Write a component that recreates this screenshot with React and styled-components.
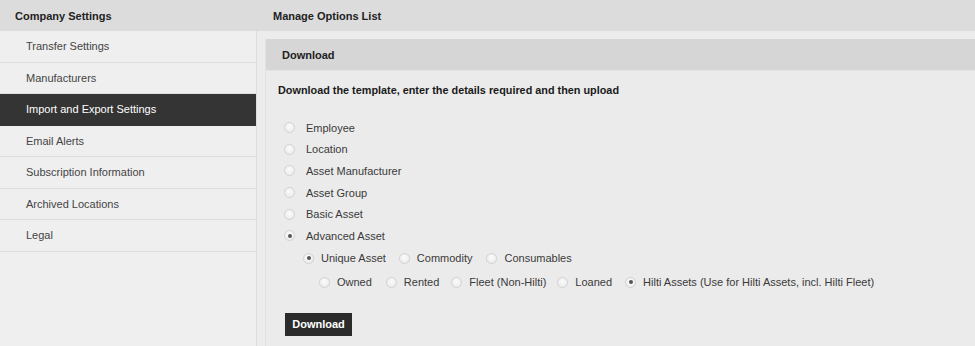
import React from "react";
import styled, { createGlobalStyle } from "styled-components";

const Global = createGlobalStyle`
  html, body { margin: 0; padding: 0; background: #ececec; }
  body { font-family: "Liberation Sans", Arial, sans-serif; font-size: 11px; color: #333; }
  * { box-sizing: border-box; }
`;

const Page = styled.div`
  display: grid;
  grid-template-columns: 257px 1fr;
  width: 975px;
  height: 346px;
  overflow: hidden;
`;

const Sidebar = styled.div`
  background: #efefef;
  border-right: 1px solid #dcdcdc;
  display: flex;
  flex-direction: column;
`;

const HeaderBar = styled.div`
  height: 31px;
  background: #dcdcdc;
  display: flex;
  align-items: center;
  padding-left: ${(p) => p.$pad}px;
  font-weight: bold;
  color: #222;
  font-size: 11px;
`;

const NavItem = styled.div`
  height: 31.5px;
  display: flex;
  align-items: center;
  padding-left: 26px;
  border-bottom: 1px solid ${(p) => (p.$active ? "#333" : "#dedede")};
  background: ${(p) => (p.$active ? "#343434" : "transparent")};
  color: ${(p) => (p.$active ? "#fff" : "#444")};
`;

const Main = styled.div`
  display: flex;
  flex-direction: column;
  min-width: 0;
`;

const Content = styled.div`
  padding: 8px 0 0 8px;
  flex: 1;
`;

const Panel = styled.div`
  background: #ebebeb;
  border-left: 1px solid #e2e2e2;
  height: 100%;
`;

const PanelHeader = styled.div`
  height: 32px;
  background: #d6d6d6;
  display: flex;
  align-items: center;
  padding-left: 16px;
  font-weight: bold;
  color: #222;
  border-bottom: 1px solid #e4e4e4;
`;

const PanelBody = styled.div`
  padding: 13px 0 0 12px;
`;

const Intro = styled.div`
  font-weight: bold;
  color: #1a1a1a;
  font-size: 10.85px;
  margin-bottom: 21px;
`;

const RadioRow = styled.div`
  display: flex;
  align-items: center;
  height: ${(p) => p.$h || 21.6}px;
  padding-left: ${(p) => p.$indent || 0}px;
`;

const Option = styled.label`
  display: flex;
  align-items: center;
  margin-right: ${(p) => p.$mr || 0}px;
  color: #3a3a3a;
`;

const Circle = styled.span`
  width: 11px;
  height: 11px;
  border-radius: 50%;
  border: 1px solid #d2d2d2;
  background: radial-gradient(circle at 50% 40%, #fbfbfb, #e8e8e8);
  display: inline-flex;
  align-items: center;
  justify-content: center;
  margin-right: ${(p) => p.$gap}px;
  flex-shrink: 0;
  &::after {
    content: "";
    width: 4px;
    height: 4px;
    border-radius: 50%;
    background: ${(p) => (p.$checked ? "#555" : "transparent")};
  }
`;

const Button = styled.button`
  margin-top: ${(p) => p.$mt}px;
  margin-left: 7px;
  background: #2b2b2b;
  color: #fff;
  border: none;
  font-family: "Liberation Sans", Arial, sans-serif;
  font-weight: bold;
  font-size: 11px;
  width: 67px;
  height: 23px;
  padding: 0;
`;

function Radio({ label, checked, gap = 11, mr }) {
  return (
    <Option $mr={mr}>
      <Circle $checked={checked} $gap={gap} />
      {label}
    </Option>
  );
}

const nav = [
  "Transfer Settings",
  "Manufacturers",
  "Import and Export Settings",
  "Email Alerts",
  "Subscription Information",
  "Archived Locations",
  "Legal",
];

const mainOptions = ["Employee", "Location", "Asset Manufacturer", "Asset Group", "Basic Asset", "Advanced Asset"];

export default function App() {
  return (
    <>
      <Global />
      <Page>
        <Sidebar>
          <HeaderBar $pad={15}>Company Settings</HeaderBar>
          {nav.map((n) => (
            <NavItem key={n} $active={n === "Import and Export Settings"}>
              {n}
            </NavItem>
          ))}
        </Sidebar>
        <Main>
          <HeaderBar $pad={16}>Manage Options List</HeaderBar>
          <Content>
            <Panel>
              <PanelHeader>Download</PanelHeader>
              <PanelBody>
                <Intro>Download the template, enter the details required and then upload</Intro>
                {mainOptions.map((o) => (
                  <RadioRow key={o} $indent={6}>
                    <Radio label={o} checked={o === "Advanced Asset"} gap={11} />
                  </RadioRow>
                ))}
                <RadioRow $indent={25} $h={23}>
                  <Radio label="Unique Asset" checked gap={7} mr={13} />
                  <Radio label="Commodity" gap={7} mr={14} />
                  <Radio label="Consumables" gap={7} />
                </RadioRow>
                <RadioRow $indent={41} $h={25}>
                  <Radio label="Owned" gap={7} mr={14} />
                  <Radio label="Rented" gap={7} mr={12} />
                  <Radio label="Fleet (Non-Hilti)" gap={7} mr={11} />
                  <Radio label="Loaned" gap={7} mr={13} />
                  <Radio label="Hilti Assets (Use for Hilti Assets, incl. Hilti Fleet)" checked gap={7} />
                </RadioRow>
                <Button $mt={18}>Download</Button>
              </PanelBody>
            </Panel>
          </Content>
        </Main>
      </Page>
    </>
  );
}
